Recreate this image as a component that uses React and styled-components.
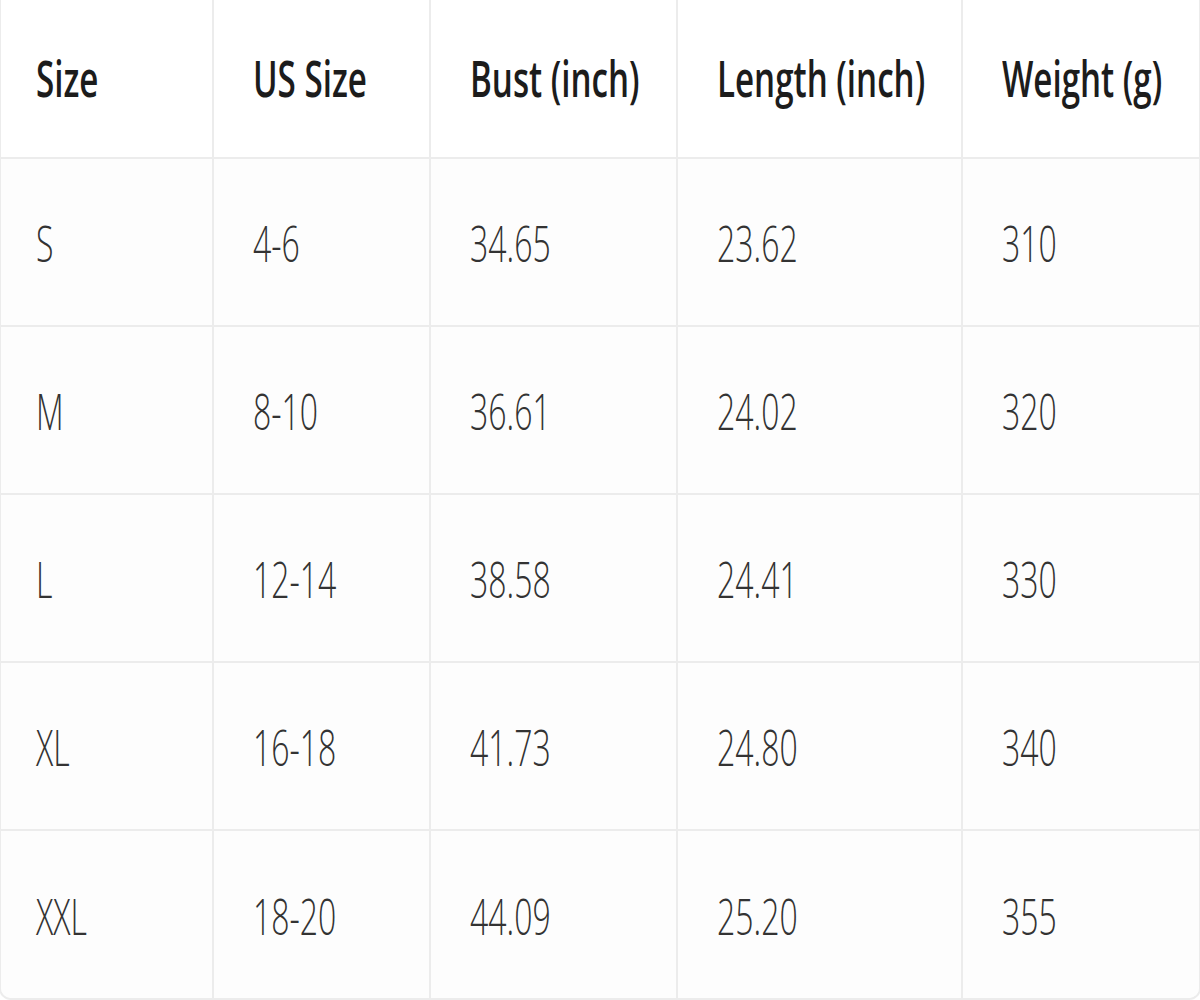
import React from "react";
import styled, { createGlobalStyle } from "styled-components";

const Global = createGlobalStyle`
  html, body { margin: 0; padding: 0; background: #ffffff; }
  body { font-family: "Open Sans", "Noto Sans", sans-serif; overflow: hidden; }
`;

const Wrapper = styled.div`
  margin: -2px -1px 0 -1px;
  border: 2px solid #ececec;
  border-radius: 0 0 12px 12px;
  overflow: hidden;
  display: grid;
  grid-template-columns: 213px 217px 247px 285px 1fr;
  background: #fdfdfd;
`;

const Cell = styled.div`
  box-sizing: border-box;
  height: ${(p) => p.$h}px;
  display: flex;
  align-items: center;
  padding-left: ${(p) => (p.$first ? 35 : 39)}px;
  border-right: ${(p) => (p.$last ? "none" : "2px solid #ececec")};
  border-bottom: ${(p) => (p.$bottom ? "none" : "2px solid #ececec")};
  background: ${(p) => (p.$head ? "#ffffff" : "#fdfdfd")};
  overflow: hidden;
`;

const Text = styled.span`
  display: inline-block;
  white-space: nowrap;
  font-size: ${(p) => (p.$head ? 51 : 50)}px;
  line-height: 1;
  font-weight: ${(p) => (p.$head ? 600 : 300)};
  color: ${(p) => (p.$head ? "#1c1c1c" : "#333333")};
  transform: scaleX(${(p) => (p.$head ? 0.65 : 0.64)});
  transform-origin: left center;
  margin-top: ${(p) => (p.$head ? -3 : 2)}px;
`;

const headers = ["Size", "US Size", "Bust (inch)", "Length (inch)", "Weight (g)"];
const rows = [
  ["S", "4-6", "34.65", "23.62", "310"],
  ["M", "8-10", "36.61", "24.02", "320"],
  ["L", "12-14", "38.58", "24.41", "330"],
  ["XL", "16-18", "41.73", "24.80", "340"],
  ["XXL", "18-20", "44.09", "25.20", "355"],
];

export default function App() {
  return (
    <>
      <Global />
      <Wrapper>
        {headers.map((h, i) => (
          <Cell key={h} $head $h={159} $first={i === 0} $last={i === 4}>
            <Text $head>{h}</Text>
          </Cell>
        ))}
        {rows.map((r, ri) =>
          r.map((v, ci) => (
            <Cell
              key={ri + "-" + ci}
              $h={ri === rows.length - 1 ? 167 : 168}
              $first={ci === 0}
              $last={ci === 4}
              $bottom={ri === rows.length - 1}
            >
              <Text>{v}</Text>
            </Cell>
          ))
        )}
      </Wrapper>
    </>
  );
}
